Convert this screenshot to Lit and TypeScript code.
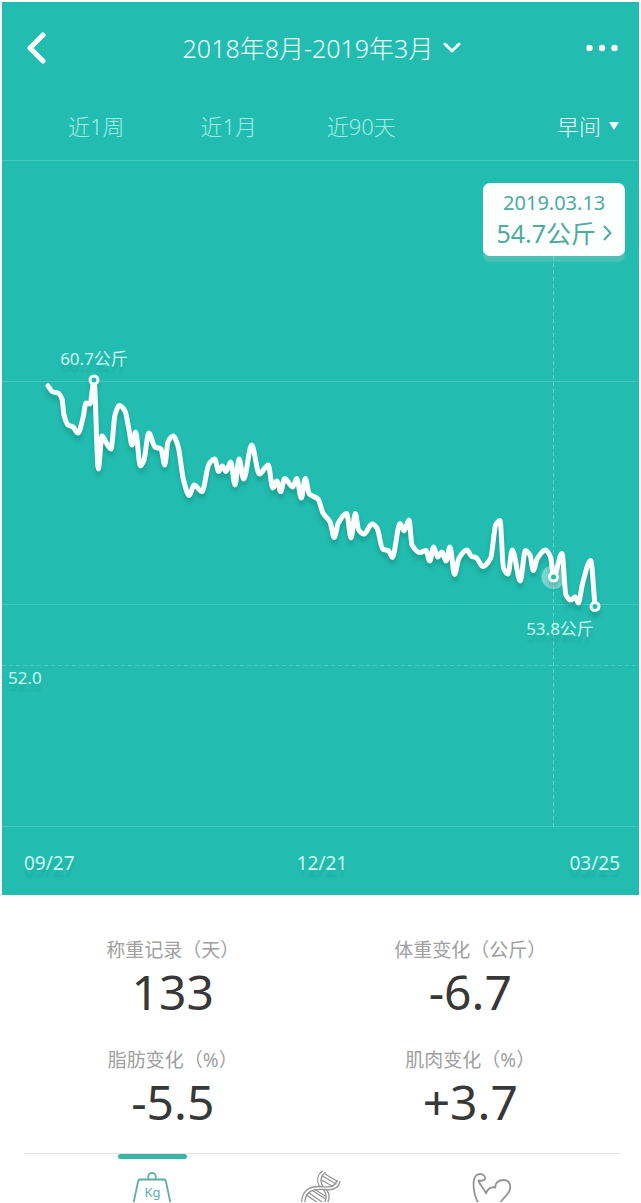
import { LitElement, html, svg, css } from "lit";
import { customElement, property, state } from "lit/decorators.js";

type Point = [number, number];

const WEIGHT_POINTS: Point[] = [
  [48, 386], [53, 392], [58, 393], [62, 399], [64, 415], [68, 425], [73, 427], [78, 433],
  [83, 418], [86, 403], [90, 404], [94, 380], [98.3, 469], [102, 436], [107, 444], [111, 449],
  [115, 415], [119.5, 405.5], [125, 411], [129, 430], [132, 445], [135.7, 432], [140.3, 466],
  [144, 460], [148.7, 433], [155, 447], [161, 449], [164.7, 465], [168, 442], [173, 436],
  [178, 446], [183.5, 480], [189.3, 495.5], [194, 485], [202, 491.5], [209, 464], [214.7, 459],
  [218.7, 471.5], [222.3, 466], [226, 471.5], [230.7, 462], [235, 485], [239, 459], [243.7, 479],
  [251.7, 445], [259.3, 474], [268.3, 465], [272.7, 488], [276.7, 481], [280.7, 491.5],
  [284.7, 478.5], [292.7, 487], [296.7, 478.5], [301.3, 498], [305.3, 478.5], [309.3, 494],
  [318, 499], [323, 513], [330, 522], [334.2, 537.5], [338.3, 523], [346.7, 513.5], [351, 538],
  [355.3, 513.5], [358.7, 530], [364, 534], [372, 524], [377, 528], [382.7, 549], [388.7, 551],
  [392.3, 557.5], [400, 523.5], [404, 531], [409, 520], [412, 545], [420, 552.5], [426, 550.5],
  [429.7, 561], [433.7, 547], [437.7, 557], [442, 552], [446, 561], [450, 547], [454.5, 574.5],
  [459, 558], [467, 550], [471.7, 556.5], [476, 557.5], [482.7, 566.5], [490.7, 558],
  [495.7, 525], [500, 520.5], [503.5, 568], [508, 574], [512.3, 550], [520.3, 581], [525.3, 550.5],
  [530, 555], [533.3, 570.5], [537.3, 558.5], [545.7, 550], [550.5, 557], [553.7, 576.5],
  [562, 553.5], [566, 595], [570.7, 600], [575.3, 597], [578.3, 603], [582.7, 583], [590.7, 560.5],
  [595, 606],
];

/** Smooth path through the points that never overshoots a peak or a dip. */
function smoothPath(points: Point[]): string {
  const last = points.length - 1;
  const slope = (i: number) => (points[i + 1][1] - points[i][1]) / (points[i + 1][0] - points[i][0]);
  const tangent = (i: number) => {
    if (i === 0 || i === last) return slope(i === 0 ? 0 : last - 1);
    const a = slope(i - 1);
    const b = slope(i);
    return a * b <= 0 ? 0 : (2 * a * b) / (a + b);
  };
  let d = `M${points[0][0]} ${points[0][1]}`;
  for (let i = 0; i < last; i++) {
    const [x0, y0] = points[i];
    const [x1, y1] = points[i + 1];
    const h = (x1 - x0) / 3;
    d += `C${x0 + h} ${y0 + h * tangent(i)} ${x1 - h} ${y1 - h * tangent(i + 1)} ${x1} ${y1}`;
  }
  return d;
}

const FONT = css`"Noto Sans", "Noto Sans CJK SC", sans-serif`;

@customElement("weight-chart")
class WeightChart extends LitElement {
  static styles = css`
    :host { display: block; position: relative; font-family: ${FONT}; font-weight: 400; }
    .plot { display: block; width: 100%; height: auto; }
    .grid { stroke: #3fcabd; stroke-width: 1; }
    .guide { stroke: #5cd2c6; stroke-width: 1; stroke-dasharray: 4 3; }
    .floor { stroke: #43cbbf; stroke-width: 1; stroke-dasharray: 4 3; }
    .curve { filter: drop-shadow(0 5px 2px rgba(0, 70, 60, 0.22)); }
    .line { fill: none; stroke: #fafffe; stroke-width: 5; stroke-linejoin: round; stroke-linecap: round; }
    .dot { fill: #22bdb0; stroke: #fafffe; stroke-width: 3; }
    .halo { fill: #ffffff; opacity: 0.4; }
    .mark { font-size: 17px; fill: #cdf8f2; text-shadow: 0 7px 2px rgba(0, 90, 80, 0.14); }
    .tip {
      position: absolute; top: 23px; right: 14px;
      display: flex; flex-direction: column; align-items: center;
      margin: 0; padding: 6px 13px 7px; border: 0; border-radius: 7px;
      background: #fdffff; color: #4caaa0; font-family: inherit; font-weight: inherit;
      box-shadow: 0 6px 1px rgba(150, 200, 190, 0.35);
    }
    .date { font-size: 20px; line-height: 28px; }
    .value { display: flex; align-items: center; gap: 7px; font-size: 25px; line-height: 32px; }
    .axis {
      display: grid; grid-template-columns: 1fr 1fr 1fr; align-items: center;
      height: 68px; padding: 4px 19px 0 22px; box-sizing: border-box;
      font-size: 19px; line-height: 26px; color: #cdf8f2;
      text-shadow: 0 7px 2px rgba(0, 90, 80, 0.14);
    }
    .mid { text-align: center; }
    .end { text-align: right; }
  `;

  render() {
    return html`
      <svg class="plot" viewBox="2 160 637 667" role="img" aria-label="体重曲线">
        ${[160.5, 381.5, 604.5, 826.5].map((y) => svg`<line class="grid" x1="2" x2="639" y1=${y} y2=${y} />`)}
        <line class="floor" x1="2" x2="639" y1="665.5" y2="665.5" />
        <line class="guide" x1="553.5" x2="553.5" y1="256" y2="827" />
        <circle class="halo" cx="553.5" cy="577" r="12" />
        <g class="curve">
          <path class="line" d=${smoothPath(WEIGHT_POINTS)} />
          <circle class="dot" cx="94" cy="380" r="4" />
          <circle class="dot" cx="553.5" cy="577" r="4" />
          <circle class="dot" cx="595" cy="606.5" r="4" />
        </g>
        <text class="mark" x="94" y="365" text-anchor="middle">60.7公斤</text>
        <text class="mark" x="560" y="635" text-anchor="middle">53.8公斤</text>
        <text class="mark" x="8" y="684">52.0</text>
      </svg>
      <button class="tip" type="button">
        <span class="date">2019.03.13</span>
        <span class="value">54.7公斤
          <svg width="9" height="16" viewBox="0 0 9 16" fill="none" stroke="#4caaa0" stroke-width="2" aria-hidden="true">
            <path d="M1 1L7.500 8L1 15" />
          </svg>
        </span>
      </button>
      <div class="axis">
        <span>09/27</span><span class="mid">12/21</span><span class="end">03/25</span>
      </div>
    `;
  }
}

@customElement("stat-item")
class StatItem extends LitElement {
  @property() label = "";
  @property() value = "";

  static styles = css`
    :host { display: block; text-align: center; font-family: ${FONT}; }
    .label { font-size: 19px; line-height: 28px; color: #a0a0a0; white-space: nowrap; }
    .value { font-size: 48px; line-height: 56px; color: #383838; }
  `;

  render() {
    return html`<div class="label" lang="zh-CN">${this.label}</div><div class="value">${this.value}</div>`;
  }
}

const STATS = [
  ["称重记录（天）", "133"],
  ["体重变化（公斤）", "-6.7"],
  ["脂肪变化（%）", "-5.5"],
  ["肌肉变化（%）", "+3.7"],
];

@customElement("app-root")
class AppRoot extends LitElement {
  @state() private metric = 0;

  static styles = css`
    :host { display: block; background: #ffffff; font-family: ${FONT}; overflow: hidden; }
    button, select { margin: 0; padding: 0; border: 0; background: none; font: inherit; color: inherit; appearance: none; }
    svg { display: block; }
    .panel { margin: 2px 2px 0; background: #22bdb0; color: #f2fffe; font-weight: 300; }
    .bar {
      display: grid; grid-template-columns: 1fr auto 1fr; align-items: center;
      height: 92px; padding: 0 21px 0 24px;
    }
    .title { display: flex; align-items: center; gap: 10px; font-size: 25px; line-height: 36px; white-space: nowrap; }
    .more { justify-self: end; }
    .ranges {
      display: grid; grid-template-columns: 9fr 9fr 9fr 13fr; align-items: center;
      height: 66px; padding: 0 20px 2px 28px; box-sizing: border-box;
      font-size: 22px; line-height: 32px;
    }
    .range { color: #a0ece4; }
    .period { justify-self: end; display: flex; align-items: center; gap: 7px; }
    .stats {
      display: grid; grid-template-columns: 1fr 1fr; row-gap: 26px;
      padding: 41px 22px 23px 24px;
    }
    .tabs {
      display: grid; grid-template-columns: 1fr 1fr 1fr;
      height: 49px; margin: 0 21px 0 24px; padding: 0 43px; box-sizing: border-box;
      border-top: 1px solid #e4e4e4; overflow: hidden;
    }
    .tab { display: flex; flex-direction: column; align-items: center; color: #959595; height: 64px; }
    .rule { width: 69px; height: 5px; border-radius: 3px; margin: 0 0 11px; }
    .tab.on { color: #5aaea6; }
    .tab.on .rule { background: #3db3a6; }
    .kg { font-family: "Noto Sans", sans-serif; font-size: 13px; }
  `;

  private icons = [
    html`<svg width="44" height="40" viewBox="0 0 44 40" fill="none" stroke="currentColor" stroke-width="1.800" aria-hidden="true">
      <path d="M10 9.500H34Q35.500 9.500 35.800 11L42 40M10 9.500Q8.500 9.500 8.200 11L2 40" stroke-linejoin="round" />
      <path d="M18.300 9V6.500A3.700 3.700 0 0 1 25.700 6.500V9" />
      <text class="kg" x="22.500" y="27" text-anchor="middle" fill="currentColor" stroke="none">Kg</text>
    </svg>`,
    html`<svg width="44" height="40" viewBox="0 0 44 40" fill="none" stroke="currentColor" stroke-width="1.300" stroke-linecap="round" aria-hidden="true">
      <path d="M22.500 1C17 5 16.500 11 19.500 16.500M25.500 2.500C20 6 20 11 22.500 16.500" />
      <path d="M40 11.500C38.500 18.500 32 20.500 24.500 19.500C14 18.500 5.500 20 4.500 34M37 10.500C35.500 16 31 17.300 24.500 16.800C12 15.500 2.500 18 1.500 32" />
      <path d="M27 20.500C30.500 25 29.500 30 26 36M24 20.500C27.500 25 26.500 30 23 36" />
      <path d="M25 4L37.500 11.500M22.500 6L36 14M21.500 10L33 16.500" />
      <path d="M15 19.500L26 26.500M12.500 20.500L25.500 29M8.500 22.500L22 32M6.500 25L18 33" />
    </svg>`,
    html`<svg width="44" height="40" viewBox="0 0 44 40" fill="none" stroke="currentColor" stroke-width="1.800" stroke-linejoin="round" stroke-linecap="round" aria-hidden="true">
      <path d="M9 34C5 28 3.500 20 3.500 13C3.500 7 6.500 4 10 4C13 4 15.500 6 15 8.500C14.500 11 11.500 11 8.500 10.500C9 14 14 18 16 23.500C17.500 19 20.500 16.500 25.500 17.500C24.500 13 29 10 33.500 10C38.500 10 41 14 40 19C39 25 33 27 29 35" />
    </svg>`,
  ];

  render() {
    return html`
      <section class="panel" lang="zh-CN">
        <header class="bar">
          <button type="button" aria-label="返回">
            <svg width="20" height="34" viewBox="0 0 20 34" fill="none" stroke="#ffffff" stroke-width="5" stroke-linecap="round" stroke-linejoin="round">
              <path d="M17 4L4 17L17 30" />
            </svg>
          </button>
          <button class="title" type="button" aria-haspopup="dialog">
            2018年8月-2019年3月
            <svg width="18" height="12" viewBox="0 0 18 12" fill="none" stroke="currentColor" stroke-width="3" stroke-linecap="round" stroke-linejoin="round">
              <path d="M2 2L9 9L16 2" />
            </svg>
          </button>
          <button class="more" type="button" aria-label="更多">
            <svg width="32" height="8" viewBox="0 0 32 8" fill="#ffffff">
              <circle cx="3.500" cy="4" r="3.200" /><circle cx="16" cy="4" r="3.200" /><circle cx="28.500" cy="4" r="3.200" />
            </svg>
          </button>
        </header>
        <nav class="ranges">
          <button class="range" type="button">近1周</button>
          <button class="range" type="button">近1月</button>
          <button class="range" type="button">近90天</button>
          <label class="period">
            <select aria-label="时段"><option>早间</option></select>
            <svg width="10" height="10" viewBox="0 0 10 10" fill="currentColor"><path d="M0 1H10L5 9Z" /></svg>
          </label>
        </nav>
        <weight-chart></weight-chart>
      </section>
      <section class="stats">
        ${STATS.map(([label, value]) => html`<stat-item .label=${label} .value=${value}></stat-item>`)}
      </section>
      <nav class="tabs">
        ${["体重", "脂肪", "肌肉"].map(
          (name, i) => html`<button
            class=${this.metric === i ? "tab on" : "tab"}
            type="button"
            aria-label=${name}
            @click=${() => (this.metric = i)}
          ><span class="rule"></span>${this.icons[i]}</button>`,
        )}
      </nav>
    `;
  }
}
